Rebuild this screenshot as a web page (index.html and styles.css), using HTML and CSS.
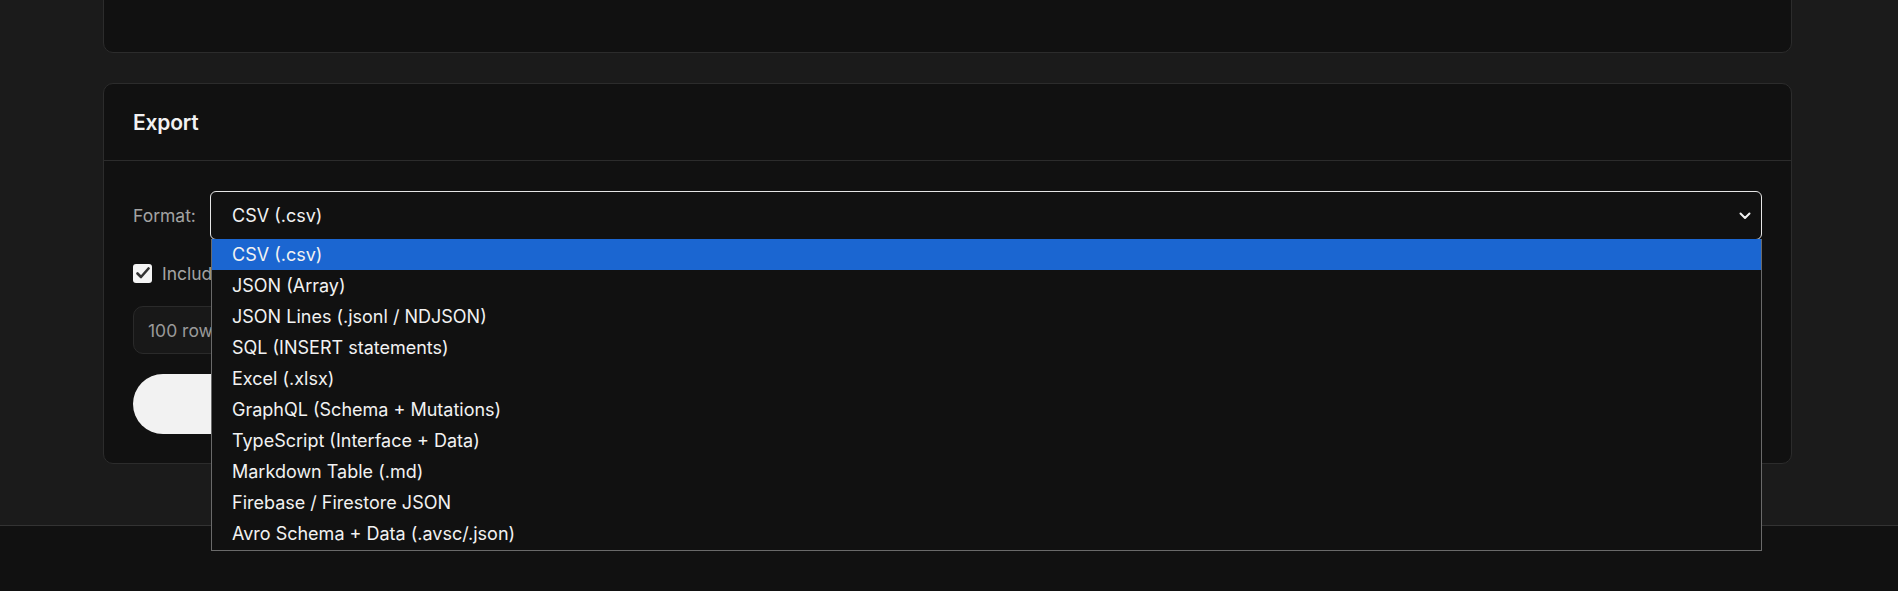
FILE: index.html
```html
<!DOCTYPE html>
<html lang="en">
<head>
<meta charset="utf-8">
<title>Export</title>
<link rel="stylesheet" href="styles.css">
</head>
<body>
<main class="page">
  <section class="card card-top"></section>
  <section class="card">
    <header class="card-header"><h2 class="card-title">Export</h2></header>
    <div class="card-body">
      <div class="field-row">
        <label class="field-label">Format:</label>
        <div class="select-wrap">
          <div class="select">
            <span class="select-value">CSV (.csv)</span>
            <svg class="chevron" width="12" height="8" viewBox="0 0 12 8"><path d="M1.5 1.5 L6 6 L10.5 1.5" fill="none" stroke="#f2f2f2" stroke-width="2" stroke-linecap="round" stroke-linejoin="round"/></svg>
          </div>
          <ul class="dropdown">
            <li class="option selected">CSV (.csv)</li>
            <li class="option">JSON (Array)</li>
            <li class="option">JSON Lines (.jsonl / NDJSON)</li>
            <li class="option">SQL (INSERT statements)</li>
            <li class="option">Excel (.xlsx)</li>
            <li class="option">GraphQL (Schema + Mutations)</li>
            <li class="option">TypeScript (Interface + Data)</li>
            <li class="option">Markdown Table (.md)</li>
            <li class="option">Firebase / Firestore JSON</li>
            <li class="option">Avro Schema + Data (.avsc/.json)</li>
          </ul>
        </div>
      </div>
      <label class="check-row">
        <span class="checkbox"><svg width="14" height="12" viewBox="0 0 14 12"><path d="M1.5 6.5 L5 10 L12.5 1.5" fill="none" stroke="#333" stroke-width="2.6" stroke-linecap="round" stroke-linejoin="round"/></svg></span>
        <span class="check-label">Include headers</span>
      </label>
      <div class="rows-input">100 rows</div>
      <button class="download-btn">Download</button>
    </div>
  </section>
</main>
<footer class="footer"></footer>
</body>
</html>
```
FILE: styles.css
```css
* { box-sizing: border-box; }
html, body { margin: 0; padding: 0; }
body {
  background: #1b1b1b;
  font-family: Inter, "Liberation Sans", sans-serif;
  color: #f0f0f0;
  height: 591px;
  overflow: hidden;
  display: flex;
  flex-direction: column;
}
.page {
  width: 1689px;
  margin-left: 103px;
  display: flex;
  flex-direction: column;
  gap: 30px;
}
.card {
  background: #111111;
  border: 1px solid #2c2c2c;
  border-radius: 10px;
}
.card-top {
  height: 100px;
  margin-top: -47px;
}
.card-header {
  height: 77px;
  border-bottom: 1px solid #2c2c2c;
  display: flex;
  align-items: center;
  padding: 0 29px;
}
.card-title {
  margin: 0;
  font-size: 21px;
  font-weight: 600;
  color: #f2f2f2;
  letter-spacing: -0.2px;
}
.card-body {
  padding: 30px 29px 29px;
  display: flex;
  flex-direction: column;
  gap: 20px;
}
.field-row {
  display: flex;
  align-items: center;
  gap: 15px;
}
.field-label {
  width: 62px;
  font-size: 17.5px;
  color: #a3a3a3;
  white-space: nowrap;
}
.select-wrap {
  flex: 1;
  position: relative;
}
.select {
  height: 49px;
  border: 1px solid #e6e6e6;
  border-radius: 6px;
  background: #111111;
  display: flex;
  align-items: center;
  justify-content: space-between;
  padding: 0 10px 0 21px;
  font-size: 18px;
  color: #f2f2f2;
}
.chevron { display: block; }
.dropdown {
  position: absolute;
  left: 1px;
  right: 0;
  top: 48px;
  margin: 0;
  padding: 0 0 1px;
  list-style: none;
  background: #111111;
  border: 1px solid #6a6a6a;
  border-top: none;
  z-index: 10;
}
.option {
  height: 31px;
  line-height: 31px;
  padding-left: 20px;
  font-size: 18px;
  color: #f2f2f2;
}
.option.selected { background: #1b66d1; }
.check-row {
  display: flex;
  align-items: center;
  gap: 10px;
  height: 26px;
}
.checkbox {
  width: 19px;
  height: 19px;
  border-radius: 3px;
  background: #f5f5f5;
  display: flex;
  align-items: center;
  justify-content: center;
}
.check-label { font-size: 17.5px; color: #a3a3a3; }
.rows-input {
  width: 360px;
  height: 48px;
  border: 1px solid #2a2a2a;
  border-radius: 10px;
  background: #181818;
  display: flex;
  align-items: center;
  padding-left: 14px;
  font-size: 17.5px;
  color: #9a9a9a;
}
.download-btn {
  width: 400px;
  height: 60px;
  border: none;
  border-radius: 30px;
  background: #f2f2f2;
  color: #111;
  font-family: inherit;
  font-size: 17px;
  font-weight: 600;
}
.footer {
  margin-top: auto;
  height: 66px;
  border-top: 1px solid #333;
  background: #111111;
}
```
